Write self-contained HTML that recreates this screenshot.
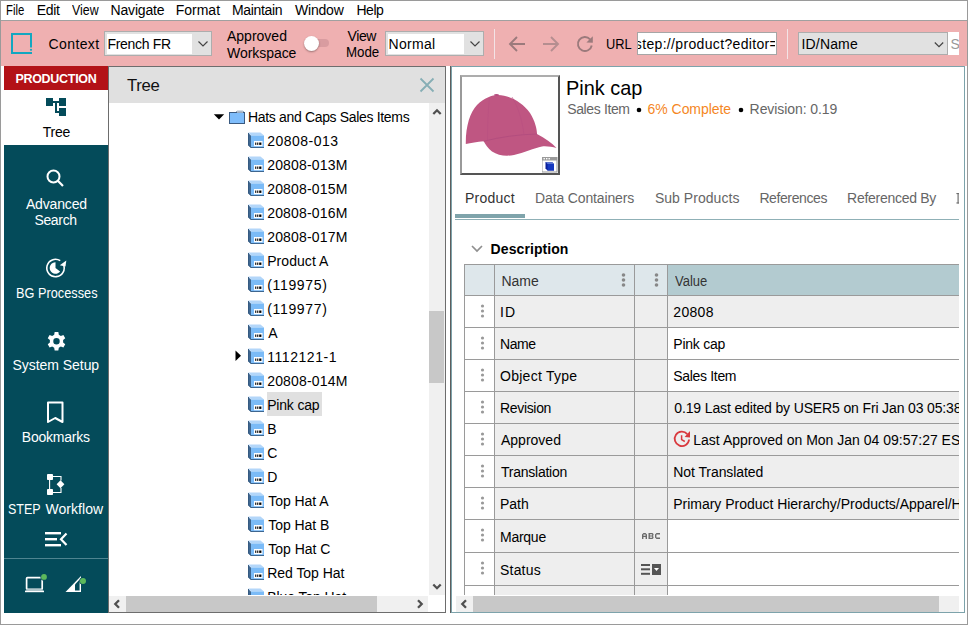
<!DOCTYPE html>
<html><head><meta charset="utf-8"><style>
html,body{margin:0;padding:0;}
body{width:968px;height:625px;position:relative;overflow:hidden;background:#fff;font-family:"Liberation Sans", sans-serif;}
div,svg{box-sizing:border-box;}
</style></head><body>
<div style="position:absolute;left:0px;top:0px;width:968px;height:625px;background:#fff;"></div>
<div style="position:absolute;left:5.79px;top:2.5px;font-size:14px;font-weight:400;color:#000;line-height:1;white-space:pre;transform:scaleX(0.8095);transform-origin:0 0;">File</div>
<div style="position:absolute;left:36.80px;top:2.5px;font-size:14px;font-weight:400;color:#000;line-height:1;white-space:pre;letter-spacing:-0.333px;">Edit</div>
<div style="position:absolute;left:72.30px;top:2.5px;font-size:14px;font-weight:400;color:#000;line-height:1;white-space:pre;transform:scaleX(0.8833);transform-origin:0 0;">View</div>
<div style="position:absolute;left:110.60px;top:2.5px;font-size:14px;font-weight:400;color:#000;line-height:1;white-space:pre;letter-spacing:-0.186px;">Navigate</div>
<div style="position:absolute;left:175.70px;top:2.5px;font-size:14px;font-weight:400;color:#000;line-height:1;white-space:pre;letter-spacing:0.000px;">Format</div>
<div style="position:absolute;left:232.00px;top:2.5px;font-size:14px;font-weight:400;color:#000;line-height:1;white-space:pre;letter-spacing:-0.357px;">Maintain</div>
<div style="position:absolute;left:295.00px;top:2.5px;font-size:14px;font-weight:400;color:#000;line-height:1;white-space:pre;letter-spacing:-0.200px;">Window</div>
<div style="position:absolute;left:356.50px;top:2.5px;font-size:14px;font-weight:400;color:#000;line-height:1;white-space:pre;letter-spacing:-0.500px;">Help</div>
<div style="position:absolute;left:1px;top:20px;width:966px;height:1px;background:#a0a0a0;"></div>
<div style="position:absolute;left:1px;top:21px;width:966px;height:45px;background:#efb0b1;"></div>
<svg style="position:absolute;left:10px;top:32px;" width="24" height="24" viewBox="0 0 24 24"><rect x="1" y="1" width="21" height="2" fill="#13a7c0"/><rect x="1" y="1" width="2" height="21" fill="#13a7c0"/><rect x="1" y="20" width="21" height="2" fill="#13a7c0"/><rect x="20" y="1" width="2" height="14.5" fill="#13a7c0"/><circle cx="21" cy="17.8" r="1.1" fill="#13a7c0"/></svg>
<div style="position:absolute;left:48.60px;top:37px;font-size:14px;font-weight:400;color:#000;line-height:1;white-space:pre;letter-spacing:0.383px;">Context</div>
<div style="position:absolute;left:104px;top:31px;width:108px;height:25px;background:#e1e1e1;border:1px solid #adadad;"></div>
<div style="position:absolute;left:107px;top:34px;width:85px;height:20px;background:#fff;"></div>
<div style="position:absolute;left:107.40px;top:37px;font-size:14px;font-weight:400;color:#000;line-height:1;white-space:pre;letter-spacing:-0.300px;">French FR</div>
<svg style="position:absolute;left:197px;top:40px;" width="12" height="8" viewBox="0 0 12 8"><path d="M1.5 1.5 L6 6 L10.5 1.5" fill="none" stroke="#444" stroke-width="1.2"/></svg>
<div style="position:absolute;left:227.00px;top:28.5px;font-size:14px;font-weight:400;color:#000;line-height:1;white-space:pre;letter-spacing:0.000px;">Approved</div>
<div style="position:absolute;left:227.00px;top:45.5px;font-size:14px;font-weight:400;color:#000;line-height:1;white-space:pre;letter-spacing:-0.050px;">Workspace</div>
<div style="position:absolute;left:304px;top:39px;width:25px;height:8px;background:#d99ca0;border-radius:4px;"></div>
<div style="position:absolute;left:303.5px;top:35.5px;width:15px;height:15px;background:#fff;border-radius:50%;box-shadow:0 1px 2px rgba(0,0,0,0.35);"></div>
<div style="position:absolute;left:347.40px;top:28.5px;font-size:14px;font-weight:400;color:#000;line-height:1;white-space:pre;letter-spacing:-0.333px;">View</div>
<div style="position:absolute;left:346.45px;top:45px;font-size:14px;font-weight:400;color:#000;line-height:1;white-space:pre;transform:scaleX(0.9500);transform-origin:0 0;">Mode</div>
<div style="position:absolute;left:385px;top:31px;width:99px;height:25px;background:#e1e1e1;border:1px solid #adadad;"></div>
<div style="position:absolute;left:388px;top:34px;width:76px;height:20px;background:#fff;"></div>
<div style="position:absolute;left:388.60px;top:37px;font-size:14px;font-weight:400;color:#000;line-height:1;white-space:pre;letter-spacing:0.300px;">Normal</div>
<svg style="position:absolute;left:469px;top:40px;" width="12" height="8" viewBox="0 0 12 8"><path d="M1.5 1.5 L6 6 L10.5 1.5" fill="none" stroke="#444" stroke-width="1.2"/></svg>
<div style="position:absolute;left:494px;top:29px;width:1px;height:30px;background:#f3e3e6;"></div>
<svg style="position:absolute;left:508px;top:35px;" width="18" height="18" viewBox="0 0 18 18"><path d="M9 2 L2 9 L9 16 M2 9 H17" fill="none" stroke="#9b7a7c" stroke-width="1.9"/></svg>
<svg style="position:absolute;left:542px;top:35px;" width="18" height="18" viewBox="0 0 18 18"><path d="M9 2 L16 9 L9 16 M16 9 H1" fill="none" stroke="#b58e90" stroke-width="1.9"/></svg>
<svg style="position:absolute;left:576px;top:35px;" width="18" height="18" viewBox="0 0 18 18"><path d="M14.1 4.32 A7 7 0 1 0 15.75 10.46" fill="none" stroke="#9b7a7c" stroke-width="1.9"/><path d="M16.8 1.2 L10.4 7.5 L16.8 7.7 Z" fill="#9b7a7c"/></svg>
<div style="position:absolute;left:606.39px;top:37px;font-size:14px;font-weight:400;color:#000;line-height:1;white-space:pre;transform:scaleX(0.9148);transform-origin:0 0;">URL</div>
<div style="position:absolute;left:637px;top:32px;width:140px;height:23px;background:#fff;border:1px solid #a6a6a6;"></div>
<div style="position:absolute;left:638px;top:33px;width:137px;height:21px;overflow:hidden;"><div style="position:absolute;left:-3.2px;top:4px;font-size:14px;line-height:1;white-space:pre;color:#000;letter-spacing:0.34px">step://product?editor=</div></div>
<div style="position:absolute;left:787px;top:29px;width:1px;height:30px;background:#f3e3e6;"></div>
<div style="position:absolute;left:798px;top:32px;width:150px;height:23px;background:#e1e1e1;border:1px solid #adadad;"></div>
<div style="position:absolute;left:801.50px;top:37px;font-size:14px;font-weight:400;color:#000;line-height:1;white-space:pre;letter-spacing:0.167px;">ID/Name</div>
<svg style="position:absolute;left:933px;top:40.5px;" width="12" height="8" viewBox="0 0 12 8"><path d="M1.8 1.5 L6 5.7 L10.2 1.5" fill="none" stroke="#444" stroke-width="1.2"/></svg>
<div style="position:absolute;left:948px;top:32px;width:11px;height:23px;background:#fff;"></div>
<div style="position:absolute;left:948px;top:32px;width:11px;height:23px;overflow:hidden;"><div style="position:absolute;left:2.5px;top:5px;font-size:14px;line-height:1;color:#999">S</div></div>
<div style="position:absolute;left:4px;top:66px;width:104px;height:24px;background:#b31217;"></div>
<div style="position:absolute;left:15.40px;top:73px;font-size:12.5px;font-weight:700;color:#fff;line-height:1;white-space:pre;letter-spacing:-0.289px;">PRODUCTION</div>
<div style="position:absolute;left:4px;top:90px;width:104px;height:55px;background:#fff;"></div>
<div style="position:absolute;left:4px;top:145px;width:104px;height:468px;background:#044b5a;"></div>
<svg style="position:absolute;left:44px;top:96px;" width="24" height="22" viewBox="0 0 24 22"><rect x="2" y="2" width="7" height="8" fill="#044b5a"/><rect x="15" y="2" width="7" height="8" fill="#044b5a"/><rect x="15" y="12" width="7" height="8" fill="#044b5a"/><path d="M9 6 H15 M12 5 V16 H15" fill="none" stroke="#044b5a" stroke-width="2"/></svg>
<div style="position:absolute;left:42.80px;top:125px;font-size:14px;font-weight:400;color:#000;line-height:1;white-space:pre;letter-spacing:-0.267px;">Tree</div>
<svg style="position:absolute;left:44px;top:168px;" width="22" height="22" viewBox="0 0 22 22"><circle cx="9.5" cy="8.5" r="6" fill="none" stroke="#fff" stroke-width="2"/><path d="M13.8 12.8 L19 18" stroke="#fff" stroke-width="2.2" stroke-linecap="butt"/></svg>
<div style="position:absolute;left:25.90px;top:196.5px;font-size:14px;font-weight:400;color:#fff;line-height:1;white-space:pre;letter-spacing:-0.143px;">Advanced</div>
<div style="position:absolute;left:34.40px;top:213px;font-size:14px;font-weight:400;color:#fff;line-height:1;white-space:pre;letter-spacing:-0.320px;">Search</div>
<svg style="position:absolute;left:44px;top:257px;" width="24" height="23" viewBox="0 0 24 23"><path d="M16.24 3.7 A8.7 8.7 0 1 0 19.38 7.32" fill="none" stroke="#fff" stroke-width="1.6"/><path d="M22.3 3.5 L15.8 8.2 L21.5 9.6 Z" fill="#fff"/><path d="M11.5 11 V5.2 A5.8 5.8 0 1 0 16.13 14.49 Z" fill="#fff"/></svg>
<div style="position:absolute;left:15.79px;top:285.5px;font-size:14px;font-weight:400;color:#fff;line-height:1;white-space:pre;transform:scaleX(0.9114);transform-origin:0 0;">BG Processes</div>
<svg style="position:absolute;left:45px;top:329px;" width="23" height="23" viewBox="0 0 23 23"><path transform="translate(11.5 12.2) scale(0.92) translate(-11.5 -11.5)" fill="#fff" fill-rule="evenodd" d="M9.5 1.5 H13.5 L14 4.5 L16.2 5.8 L19 4.7 L21 8.2 L18.7 10.1 V12.9 L21 14.8 L19 18.3 L16.2 17.2 L14 18.5 L13.5 21.5 H9.5 L9 18.5 L6.8 17.2 L4 18.3 L2 14.8 L4.3 12.9 V10.1 L2 8.2 L4 4.7 L6.8 5.8 L9 4.5 Z M11.5 8 A3.5 3.5 0 1 0 11.5 15 A3.5 3.5 0 1 0 11.5 8 Z"/></svg>
<div style="position:absolute;left:12.50px;top:358px;font-size:14px;font-weight:400;color:#fff;line-height:1;white-space:pre;letter-spacing:-0.045px;">System Setup</div>
<svg style="position:absolute;left:45px;top:400px;" width="22" height="26" viewBox="0 0 22 26"><path d="M3 2.5 H17.5 V22 L10.2 18 L3 22 Z" fill="none" stroke="#fff" stroke-width="2" stroke-linejoin="round"/></svg>
<div style="position:absolute;left:21.80px;top:430px;font-size:14px;font-weight:400;color:#fff;line-height:1;white-space:pre;letter-spacing:-0.238px;">Bookmarks</div>
<svg style="position:absolute;left:44px;top:472px;" width="24" height="24" viewBox="0 0 24 24"><rect x="3" y="2" width="6" height="6" fill="#fff" rx="0.8"/><rect x="3" y="17" width="6" height="6" fill="#fff" rx="0.8"/><path d="M5.6 8 V17 M9 4.5 H17 V8.5 M9 20.5 H17 V16" fill="none" stroke="#fff" stroke-width="1.1"/><path d="M16.5 8.2 L20.4 12.2 L16.5 16.2 L12.6 12.2 Z" fill="#fff"/></svg>
<div style="position:absolute;left:7.91px;top:502px;font-size:14px;font-weight:400;color:#fff;line-height:1;white-space:pre;transform:scaleX(0.8914);transform-origin:0 0;">STEP</div>
<div style="position:absolute;left:45.40px;top:502px;font-size:14px;font-weight:400;color:#fff;line-height:1;white-space:pre;letter-spacing:0.057px;">Workflow</div>
<svg style="position:absolute;left:44px;top:530px;" width="26" height="20" viewBox="0 0 26 20"><rect x="1" y="2" width="16" height="2.4" fill="#fff"/><rect x="1" y="8" width="12" height="2.4" fill="#fff"/><rect x="1" y="14" width="16" height="2.4" fill="#fff"/><path d="M22.5 3.5 L17 9.2 L22.5 15" fill="none" stroke="#fff" stroke-width="2.2"/></svg>
<div style="position:absolute;left:4px;top:558px;width:104px;height:1px;background:#4f8490;"></div>
<svg style="position:absolute;left:22px;top:572px;" width="28" height="24" viewBox="0 0 28 24"><rect x="4.6" y="5.7" width="15.6" height="11.6" rx="0.8" fill="none" stroke="#fff" stroke-width="1.7"/><rect x="4" y="17.2" width="17" height="1.4" fill="#9fb9bf"/><rect x="3" y="18.6" width="19" height="1.6" fill="#fff"/><circle cx="22" cy="4.9" r="3.6" fill="#044b5a"/><circle cx="22" cy="4.9" r="2.9" fill="#5cb85c"/></svg>
<svg style="position:absolute;left:62px;top:572px;" width="28" height="24" viewBox="0 0 28 24"><path d="M3.5 20 L19 4 V20 Z" fill="#fff"/><path d="M13 18.6 H17.6 V7.6 L13 12.4 Z" fill="#044b5a"/><circle cx="21" cy="9" r="3.7" fill="#044b5a"/><circle cx="21" cy="9" r="3" fill="#5cb85c"/></svg>
<div style="position:absolute;left:108px;top:66px;width:338px;height:547px;background:#fff;border:1px solid #6d6d6d;"></div>
<div style="position:absolute;left:109px;top:67px;width:336px;height:36px;background:#e0e0e0;"></div>
<div style="position:absolute;left:127.00px;top:78px;font-size:16.7px;font-weight:400;color:#111;line-height:1;white-space:pre;letter-spacing:-0.333px;">Tree</div>
<svg style="position:absolute;left:419px;top:77px;" width="16" height="16" viewBox="0 0 16 16"><path d="M1.5 1.5 L14.5 14.5 M14.5 1.5 L1.5 14.5" stroke="#86aeb5" stroke-width="1.8"/></svg>
<div style="position:absolute;left:429px;top:103px;width:16px;height:492px;background:#f0f0f0;"></div>
<div style="position:absolute;left:429px;top:311px;width:15px;height:72px;background:#c8c8c8;"></div>
<svg style="position:absolute;left:430px;top:106px;" width="14" height="12" viewBox="0 0 14 12"><path d="M3.3 8 L7 4.3 L10.7 8" fill="none" stroke="#505050" stroke-width="2.3"/></svg>
<svg style="position:absolute;left:430px;top:580px;" width="14" height="12" viewBox="0 0 14 12"><path d="M3.3 4.5 L7 8.2 L10.7 4.5" fill="none" stroke="#505050" stroke-width="2.3"/></svg>
<div style="position:absolute;left:109px;top:596px;width:319px;height:16px;background:#f0f0f0;"></div>
<div style="position:absolute;left:126px;top:596px;width:251px;height:16px;background:#c8c8c8;"></div>
<svg style="position:absolute;left:110px;top:597px;" width="14" height="14" viewBox="0 0 14 14"><path d="M9 3.3 L5.3 7 L9 10.7" fill="none" stroke="#505050" stroke-width="2.3"/></svg>
<svg style="position:absolute;left:413px;top:597px;" width="14" height="14" viewBox="0 0 14 14"><path d="M5 3.3 L8.7 7 L5 10.7" fill="none" stroke="#505050" stroke-width="2.3"/></svg>
<svg style="position:absolute;left:213px;top:114px;" width="12" height="7" viewBox="0 0 12 7"><path d="M0.8 0.3 H11.2 L6 5.6 Z" fill="#000"/></svg>
<svg style="position:absolute;left:229px;top:110px;" width="17" height="15" viewBox="0 0 17 15"><rect x="7.5" y="1.3" width="7" height="2.6" rx="1" fill="#eaf4ff" stroke="#3a5a80" stroke-width="1"/><rect x="0.5" y="2.5" width="15" height="11" fill="#7fbdfb" stroke="#3a5a80" stroke-width="1"/><path d="M8 2 H14" stroke="#fff" stroke-width="1"/></svg>
<div style="position:absolute;left:248.00px;top:110px;font-size:14px;font-weight:400;color:#000;line-height:1;white-space:pre;letter-spacing:-0.333px;">Hats and Caps Sales Items</div>
<div style="position:absolute;left:109px;top:103px;width:320px;height:492px;overflow:hidden">
<svg style="position:absolute;left:139px;top:29px;" width="16" height="16" viewBox="0 0 16 16"><path d="M0 0.8 L3 3.5 V16 L0 13.2 Z" fill="#3f6790"/><path d="M0.3 0.5 H12.5 L16 3.5 H3 Z" fill="#b3d6f9"/><rect x="3" y="3.5" width="13" height="12.5" fill="#7bbbf7"/><rect x="3" y="15" width="13" height="1" fill="#3d6690"/><path d="M0.5 1 V13 L3.2 15.8" fill="none" stroke="#34597f" stroke-width="0.9"/><rect x="6" y="9" width="8.5" height="5.2" fill="#fff"/><rect x="7.2" y="10.5" width="1.1" height="2.4" fill="#000"/><rect x="9.2" y="10.5" width="1.1" height="2.4" fill="#000"/><rect x="11.2" y="10.5" width="2.2" height="2.4" fill="#000"/></svg>
<div style="position:absolute;left:158.20px;top:31px;font-size:14px;font-weight:400;color:#000;line-height:1;white-space:pre;letter-spacing:0.500px;">20808-013</div>
<svg style="position:absolute;left:139px;top:53px;" width="16" height="16" viewBox="0 0 16 16"><path d="M0 0.8 L3 3.5 V16 L0 13.2 Z" fill="#3f6790"/><path d="M0.3 0.5 H12.5 L16 3.5 H3 Z" fill="#b3d6f9"/><rect x="3" y="3.5" width="13" height="12.5" fill="#7bbbf7"/><rect x="3" y="15" width="13" height="1" fill="#3d6690"/><path d="M0.5 1 V13 L3.2 15.8" fill="none" stroke="#34597f" stroke-width="0.9"/><rect x="6" y="9" width="8.5" height="5.2" fill="#fff"/><rect x="7.2" y="10.5" width="1.1" height="2.4" fill="#000"/><rect x="9.2" y="10.5" width="1.1" height="2.4" fill="#000"/><rect x="11.2" y="10.5" width="2.2" height="2.4" fill="#000"/></svg>
<div style="position:absolute;left:158.20px;top:55px;font-size:14px;font-weight:400;color:#000;line-height:1;white-space:pre;letter-spacing:0.178px;">20808-013M</div>
<svg style="position:absolute;left:139px;top:77px;" width="16" height="16" viewBox="0 0 16 16"><path d="M0 0.8 L3 3.5 V16 L0 13.2 Z" fill="#3f6790"/><path d="M0.3 0.5 H12.5 L16 3.5 H3 Z" fill="#b3d6f9"/><rect x="3" y="3.5" width="13" height="12.5" fill="#7bbbf7"/><rect x="3" y="15" width="13" height="1" fill="#3d6690"/><path d="M0.5 1 V13 L3.2 15.8" fill="none" stroke="#34597f" stroke-width="0.9"/><rect x="6" y="9" width="8.5" height="5.2" fill="#fff"/><rect x="7.2" y="10.5" width="1.1" height="2.4" fill="#000"/><rect x="9.2" y="10.5" width="1.1" height="2.4" fill="#000"/><rect x="11.2" y="10.5" width="2.2" height="2.4" fill="#000"/></svg>
<div style="position:absolute;left:158.20px;top:79px;font-size:14px;font-weight:400;color:#000;line-height:1;white-space:pre;letter-spacing:0.178px;">20808-015M</div>
<svg style="position:absolute;left:139px;top:101px;" width="16" height="16" viewBox="0 0 16 16"><path d="M0 0.8 L3 3.5 V16 L0 13.2 Z" fill="#3f6790"/><path d="M0.3 0.5 H12.5 L16 3.5 H3 Z" fill="#b3d6f9"/><rect x="3" y="3.5" width="13" height="12.5" fill="#7bbbf7"/><rect x="3" y="15" width="13" height="1" fill="#3d6690"/><path d="M0.5 1 V13 L3.2 15.8" fill="none" stroke="#34597f" stroke-width="0.9"/><rect x="6" y="9" width="8.5" height="5.2" fill="#fff"/><rect x="7.2" y="10.5" width="1.1" height="2.4" fill="#000"/><rect x="9.2" y="10.5" width="1.1" height="2.4" fill="#000"/><rect x="11.2" y="10.5" width="2.2" height="2.4" fill="#000"/></svg>
<div style="position:absolute;left:158.20px;top:103px;font-size:14px;font-weight:400;color:#000;line-height:1;white-space:pre;letter-spacing:0.178px;">20808-016M</div>
<svg style="position:absolute;left:139px;top:125px;" width="16" height="16" viewBox="0 0 16 16"><path d="M0 0.8 L3 3.5 V16 L0 13.2 Z" fill="#3f6790"/><path d="M0.3 0.5 H12.5 L16 3.5 H3 Z" fill="#b3d6f9"/><rect x="3" y="3.5" width="13" height="12.5" fill="#7bbbf7"/><rect x="3" y="15" width="13" height="1" fill="#3d6690"/><path d="M0.5 1 V13 L3.2 15.8" fill="none" stroke="#34597f" stroke-width="0.9"/><rect x="6" y="9" width="8.5" height="5.2" fill="#fff"/><rect x="7.2" y="10.5" width="1.1" height="2.4" fill="#000"/><rect x="9.2" y="10.5" width="1.1" height="2.4" fill="#000"/><rect x="11.2" y="10.5" width="2.2" height="2.4" fill="#000"/></svg>
<div style="position:absolute;left:158.20px;top:127px;font-size:14px;font-weight:400;color:#000;line-height:1;white-space:pre;letter-spacing:0.178px;">20808-017M</div>
<svg style="position:absolute;left:139px;top:149px;" width="16" height="16" viewBox="0 0 16 16"><path d="M0 0.8 L3 3.5 V16 L0 13.2 Z" fill="#3f6790"/><path d="M0.3 0.5 H12.5 L16 3.5 H3 Z" fill="#b3d6f9"/><rect x="3" y="3.5" width="13" height="12.5" fill="#7bbbf7"/><rect x="3" y="15" width="13" height="1" fill="#3d6690"/><path d="M0.5 1 V13 L3.2 15.8" fill="none" stroke="#34597f" stroke-width="0.9"/><rect x="6" y="9" width="8.5" height="5.2" fill="#fff"/><rect x="7.2" y="10.5" width="1.1" height="2.4" fill="#000"/><rect x="9.2" y="10.5" width="1.1" height="2.4" fill="#000"/><rect x="11.2" y="10.5" width="2.2" height="2.4" fill="#000"/></svg>
<div style="position:absolute;left:158.20px;top:151px;font-size:14px;font-weight:400;color:#000;line-height:1;white-space:pre;letter-spacing:0.062px;">Product A</div>
<svg style="position:absolute;left:139px;top:173px;" width="16" height="16" viewBox="0 0 16 16"><path d="M0 0.8 L3 3.5 V16 L0 13.2 Z" fill="#3f6790"/><path d="M0.3 0.5 H12.5 L16 3.5 H3 Z" fill="#b3d6f9"/><rect x="3" y="3.5" width="13" height="12.5" fill="#7bbbf7"/><rect x="3" y="15" width="13" height="1" fill="#3d6690"/><path d="M0.5 1 V13 L3.2 15.8" fill="none" stroke="#34597f" stroke-width="0.9"/><rect x="6" y="9" width="8.5" height="5.2" fill="#fff"/><rect x="7.2" y="10.5" width="1.1" height="2.4" fill="#000"/><rect x="9.2" y="10.5" width="1.1" height="2.4" fill="#000"/><rect x="11.2" y="10.5" width="2.2" height="2.4" fill="#000"/></svg>
<div style="position:absolute;left:158.20px;top:175px;font-size:14px;font-weight:400;color:#000;line-height:1;white-space:pre;letter-spacing:0.671px;">(119975)</div>
<svg style="position:absolute;left:139px;top:197px;" width="16" height="16" viewBox="0 0 16 16"><path d="M0 0.8 L3 3.5 V16 L0 13.2 Z" fill="#3f6790"/><path d="M0.3 0.5 H12.5 L16 3.5 H3 Z" fill="#b3d6f9"/><rect x="3" y="3.5" width="13" height="12.5" fill="#7bbbf7"/><rect x="3" y="15" width="13" height="1" fill="#3d6690"/><path d="M0.5 1 V13 L3.2 15.8" fill="none" stroke="#34597f" stroke-width="0.9"/><rect x="6" y="9" width="8.5" height="5.2" fill="#fff"/><rect x="7.2" y="10.5" width="1.1" height="2.4" fill="#000"/><rect x="9.2" y="10.5" width="1.1" height="2.4" fill="#000"/><rect x="11.2" y="10.5" width="2.2" height="2.4" fill="#000"/></svg>
<div style="position:absolute;left:158.20px;top:199px;font-size:14px;font-weight:400;color:#000;line-height:1;white-space:pre;letter-spacing:0.671px;">(119977)</div>
<svg style="position:absolute;left:139px;top:221px;" width="16" height="16" viewBox="0 0 16 16"><path d="M0 0.8 L3 3.5 V16 L0 13.2 Z" fill="#3f6790"/><path d="M0.3 0.5 H12.5 L16 3.5 H3 Z" fill="#b3d6f9"/><rect x="3" y="3.5" width="13" height="12.5" fill="#7bbbf7"/><rect x="3" y="15" width="13" height="1" fill="#3d6690"/><path d="M0.5 1 V13 L3.2 15.8" fill="none" stroke="#34597f" stroke-width="0.9"/><rect x="6" y="9" width="8.5" height="5.2" fill="#fff"/><rect x="7.2" y="10.5" width="1.1" height="2.4" fill="#000"/><rect x="9.2" y="10.5" width="1.1" height="2.4" fill="#000"/><rect x="11.2" y="10.5" width="2.2" height="2.4" fill="#000"/></svg>
<div style="position:absolute;left:159.20px;top:223px;font-size:14px;font-weight:400;color:#000;line-height:1;white-space:pre;">A</div>
<svg style="position:absolute;left:139px;top:245px;" width="16" height="16" viewBox="0 0 16 16"><path d="M0 0.8 L3 3.5 V16 L0 13.2 Z" fill="#3f6790"/><path d="M0.3 0.5 H12.5 L16 3.5 H3 Z" fill="#b3d6f9"/><rect x="3" y="3.5" width="13" height="12.5" fill="#7bbbf7"/><rect x="3" y="15" width="13" height="1" fill="#3d6690"/><path d="M0.5 1 V13 L3.2 15.8" fill="none" stroke="#34597f" stroke-width="0.9"/><rect x="6" y="9" width="8.5" height="5.2" fill="#fff"/><rect x="7.2" y="10.5" width="1.1" height="2.4" fill="#000"/><rect x="9.2" y="10.5" width="1.1" height="2.4" fill="#000"/><rect x="11.2" y="10.5" width="2.2" height="2.4" fill="#000"/></svg>
<svg style="position:absolute;left:126px;top:247px;" width="7" height="12" viewBox="0 0 7 12"><path d="M0.5 0.5 V11 L6 5.75 Z" fill="#000"/></svg>
<div style="position:absolute;left:158.20px;top:247px;font-size:14px;font-weight:400;color:#000;line-height:1;white-space:pre;letter-spacing:0.562px;">1112121-1</div>
<svg style="position:absolute;left:139px;top:269px;" width="16" height="16" viewBox="0 0 16 16"><path d="M0 0.8 L3 3.5 V16 L0 13.2 Z" fill="#3f6790"/><path d="M0.3 0.5 H12.5 L16 3.5 H3 Z" fill="#b3d6f9"/><rect x="3" y="3.5" width="13" height="12.5" fill="#7bbbf7"/><rect x="3" y="15" width="13" height="1" fill="#3d6690"/><path d="M0.5 1 V13 L3.2 15.8" fill="none" stroke="#34597f" stroke-width="0.9"/><rect x="6" y="9" width="8.5" height="5.2" fill="#fff"/><rect x="7.2" y="10.5" width="1.1" height="2.4" fill="#000"/><rect x="9.2" y="10.5" width="1.1" height="2.4" fill="#000"/><rect x="11.2" y="10.5" width="2.2" height="2.4" fill="#000"/></svg>
<div style="position:absolute;left:158.20px;top:271px;font-size:14px;font-weight:400;color:#000;line-height:1;white-space:pre;letter-spacing:0.178px;">20808-014M</div>
<div style="position:absolute;left:158px;top:289px;width:55px;height:24px;background:#e0e0e0;"></div>
<svg style="position:absolute;left:139px;top:293px;" width="16" height="16" viewBox="0 0 16 16"><path d="M0 0.8 L3 3.5 V16 L0 13.2 Z" fill="#3f6790"/><path d="M0.3 0.5 H12.5 L16 3.5 H3 Z" fill="#b3d6f9"/><rect x="3" y="3.5" width="13" height="12.5" fill="#7bbbf7"/><rect x="3" y="15" width="13" height="1" fill="#3d6690"/><path d="M0.5 1 V13 L3.2 15.8" fill="none" stroke="#34597f" stroke-width="0.9"/><rect x="6" y="9" width="8.5" height="5.2" fill="#fff"/><rect x="7.2" y="10.5" width="1.1" height="2.4" fill="#000"/><rect x="9.2" y="10.5" width="1.1" height="2.4" fill="#000"/><rect x="11.2" y="10.5" width="2.2" height="2.4" fill="#000"/></svg>
<div style="position:absolute;left:158.20px;top:295px;font-size:14px;font-weight:400;color:#000;line-height:1;white-space:pre;letter-spacing:-0.186px;">Pink cap</div>
<svg style="position:absolute;left:139px;top:317px;" width="16" height="16" viewBox="0 0 16 16"><path d="M0 0.8 L3 3.5 V16 L0 13.2 Z" fill="#3f6790"/><path d="M0.3 0.5 H12.5 L16 3.5 H3 Z" fill="#b3d6f9"/><rect x="3" y="3.5" width="13" height="12.5" fill="#7bbbf7"/><rect x="3" y="15" width="13" height="1" fill="#3d6690"/><path d="M0.5 1 V13 L3.2 15.8" fill="none" stroke="#34597f" stroke-width="0.9"/><rect x="6" y="9" width="8.5" height="5.2" fill="#fff"/><rect x="7.2" y="10.5" width="1.1" height="2.4" fill="#000"/><rect x="9.2" y="10.5" width="1.1" height="2.4" fill="#000"/><rect x="11.2" y="10.5" width="2.2" height="2.4" fill="#000"/></svg>
<div style="position:absolute;left:158.20px;top:319px;font-size:14px;font-weight:400;color:#000;line-height:1;white-space:pre;">B</div>
<svg style="position:absolute;left:139px;top:341px;" width="16" height="16" viewBox="0 0 16 16"><path d="M0 0.8 L3 3.5 V16 L0 13.2 Z" fill="#3f6790"/><path d="M0.3 0.5 H12.5 L16 3.5 H3 Z" fill="#b3d6f9"/><rect x="3" y="3.5" width="13" height="12.5" fill="#7bbbf7"/><rect x="3" y="15" width="13" height="1" fill="#3d6690"/><path d="M0.5 1 V13 L3.2 15.8" fill="none" stroke="#34597f" stroke-width="0.9"/><rect x="6" y="9" width="8.5" height="5.2" fill="#fff"/><rect x="7.2" y="10.5" width="1.1" height="2.4" fill="#000"/><rect x="9.2" y="10.5" width="1.1" height="2.4" fill="#000"/><rect x="11.2" y="10.5" width="2.2" height="2.4" fill="#000"/></svg>
<div style="position:absolute;left:158.20px;top:343px;font-size:14px;font-weight:400;color:#000;line-height:1;white-space:pre;">C</div>
<svg style="position:absolute;left:139px;top:365px;" width="16" height="16" viewBox="0 0 16 16"><path d="M0 0.8 L3 3.5 V16 L0 13.2 Z" fill="#3f6790"/><path d="M0.3 0.5 H12.5 L16 3.5 H3 Z" fill="#b3d6f9"/><rect x="3" y="3.5" width="13" height="12.5" fill="#7bbbf7"/><rect x="3" y="15" width="13" height="1" fill="#3d6690"/><path d="M0.5 1 V13 L3.2 15.8" fill="none" stroke="#34597f" stroke-width="0.9"/><rect x="6" y="9" width="8.5" height="5.2" fill="#fff"/><rect x="7.2" y="10.5" width="1.1" height="2.4" fill="#000"/><rect x="9.2" y="10.5" width="1.1" height="2.4" fill="#000"/><rect x="11.2" y="10.5" width="2.2" height="2.4" fill="#000"/></svg>
<div style="position:absolute;left:158.20px;top:367px;font-size:14px;font-weight:400;color:#000;line-height:1;white-space:pre;">D</div>
<svg style="position:absolute;left:139px;top:389px;" width="16" height="16" viewBox="0 0 16 16"><path d="M0 0.8 L3 3.5 V16 L0 13.2 Z" fill="#3f6790"/><path d="M0.3 0.5 H12.5 L16 3.5 H3 Z" fill="#b3d6f9"/><rect x="3" y="3.5" width="13" height="12.5" fill="#7bbbf7"/><rect x="3" y="15" width="13" height="1" fill="#3d6690"/><path d="M0.5 1 V13 L3.2 15.8" fill="none" stroke="#34597f" stroke-width="0.9"/><rect x="6" y="9" width="8.5" height="5.2" fill="#fff"/><rect x="7.2" y="10.5" width="1.1" height="2.4" fill="#000"/><rect x="9.2" y="10.5" width="1.1" height="2.4" fill="#000"/><rect x="11.2" y="10.5" width="2.2" height="2.4" fill="#000"/></svg>
<div style="position:absolute;left:159.20px;top:391px;font-size:14px;font-weight:400;color:#000;line-height:1;white-space:pre;letter-spacing:-0.037px;">Top Hat A</div>
<svg style="position:absolute;left:139px;top:413px;" width="16" height="16" viewBox="0 0 16 16"><path d="M0 0.8 L3 3.5 V16 L0 13.2 Z" fill="#3f6790"/><path d="M0.3 0.5 H12.5 L16 3.5 H3 Z" fill="#b3d6f9"/><rect x="3" y="3.5" width="13" height="12.5" fill="#7bbbf7"/><rect x="3" y="15" width="13" height="1" fill="#3d6690"/><path d="M0.5 1 V13 L3.2 15.8" fill="none" stroke="#34597f" stroke-width="0.9"/><rect x="6" y="9" width="8.5" height="5.2" fill="#fff"/><rect x="7.2" y="10.5" width="1.1" height="2.4" fill="#000"/><rect x="9.2" y="10.5" width="1.1" height="2.4" fill="#000"/><rect x="11.2" y="10.5" width="2.2" height="2.4" fill="#000"/></svg>
<div style="position:absolute;left:159.20px;top:415px;font-size:14px;font-weight:400;color:#000;line-height:1;white-space:pre;letter-spacing:-0.037px;">Top Hat B</div>
<svg style="position:absolute;left:139px;top:437px;" width="16" height="16" viewBox="0 0 16 16"><path d="M0 0.8 L3 3.5 V16 L0 13.2 Z" fill="#3f6790"/><path d="M0.3 0.5 H12.5 L16 3.5 H3 Z" fill="#b3d6f9"/><rect x="3" y="3.5" width="13" height="12.5" fill="#7bbbf7"/><rect x="3" y="15" width="13" height="1" fill="#3d6690"/><path d="M0.5 1 V13 L3.2 15.8" fill="none" stroke="#34597f" stroke-width="0.9"/><rect x="6" y="9" width="8.5" height="5.2" fill="#fff"/><rect x="7.2" y="10.5" width="1.1" height="2.4" fill="#000"/><rect x="9.2" y="10.5" width="1.1" height="2.4" fill="#000"/><rect x="11.2" y="10.5" width="2.2" height="2.4" fill="#000"/></svg>
<div style="position:absolute;left:159.20px;top:439px;font-size:14px;font-weight:400;color:#000;line-height:1;white-space:pre;letter-spacing:0.000px;">Top Hat C</div>
<svg style="position:absolute;left:139px;top:461px;" width="16" height="16" viewBox="0 0 16 16"><path d="M0 0.8 L3 3.5 V16 L0 13.2 Z" fill="#3f6790"/><path d="M0.3 0.5 H12.5 L16 3.5 H3 Z" fill="#b3d6f9"/><rect x="3" y="3.5" width="13" height="12.5" fill="#7bbbf7"/><rect x="3" y="15" width="13" height="1" fill="#3d6690"/><path d="M0.5 1 V13 L3.2 15.8" fill="none" stroke="#34597f" stroke-width="0.9"/><rect x="6" y="9" width="8.5" height="5.2" fill="#fff"/><rect x="7.2" y="10.5" width="1.1" height="2.4" fill="#000"/><rect x="9.2" y="10.5" width="1.1" height="2.4" fill="#000"/><rect x="11.2" y="10.5" width="2.2" height="2.4" fill="#000"/></svg>
<div style="position:absolute;left:158.20px;top:463px;font-size:14px;font-weight:400;color:#000;line-height:1;white-space:pre;letter-spacing:-0.030px;">Red Top Hat</div>
<svg style="position:absolute;left:139px;top:485px;" width="16" height="16" viewBox="0 0 16 16"><path d="M0 0.8 L3 3.5 V16 L0 13.2 Z" fill="#3f6790"/><path d="M0.3 0.5 H12.5 L16 3.5 H3 Z" fill="#b3d6f9"/><rect x="3" y="3.5" width="13" height="12.5" fill="#7bbbf7"/><rect x="3" y="15" width="13" height="1" fill="#3d6690"/><path d="M0.5 1 V13 L3.2 15.8" fill="none" stroke="#34597f" stroke-width="0.9"/><rect x="6" y="9" width="8.5" height="5.2" fill="#fff"/><rect x="7.2" y="10.5" width="1.1" height="2.4" fill="#000"/><rect x="9.2" y="10.5" width="1.1" height="2.4" fill="#000"/><rect x="11.2" y="10.5" width="2.2" height="2.4" fill="#000"/></svg>
<div style="position:absolute;left:158.20px;top:487px;font-size:14px;font-weight:400;color:#000;line-height:1;white-space:pre;letter-spacing:-0.091px;">Blue Top Hat</div>
</div>
<div style="position:absolute;left:450px;top:66px;width:515px;height:547px;background:#fff;border:1px solid #7da3ab;"></div>
<div style="position:absolute;left:450px;top:66px;width:1px;height:547px;background:#5e5e5e;"></div>
<div style="position:absolute;left:451px;top:67px;width:1px;height:545px;background:#7da3ab;"></div>
<div style="position:absolute;left:460px;top:75px;width:100px;height:100px;background:#fff;border-style:solid;border-width:2px;border-color:#adadad #555 #555 #9a9a9a;"></div>
<svg style="position:absolute;left:462px;top:77px;" width="96" height="96" viewBox="0 0 96 96"><path d="M3.8 67 C3.5 50 8 35 15 28 C22 21 30 18 36 18 C48 18.5 60 25 68 36 C73 44 75 52 75 57 C83 61 90 66 94.5 71 C90 70 85 69 80 69.5 C72 71 62 76 52 78 C44 79.5 36 78.5 30 74.5 C26 71.5 23 67 21.7 64.3 C15 65 9 66 3.8 67 Z" fill="#bf5682"/><path d="M21.7 64.3 C38 60 56 57.5 75 57" fill="none" stroke="#b04b7d" stroke-width="0.8"/><path d="M27.4 21 C26 35 25.5 50 25.5 63" fill="none" stroke="#b84f82" stroke-width="0.6"/><path d="M50 20 C56 30 60 42 62 58" fill="none" stroke="#b84f82" stroke-width="0.6"/><ellipse cx="34.5" cy="18" rx="2.5" ry="1.1" fill="#b44d7f"/></svg>
<svg style="position:absolute;left:542px;top:157px;" width="16" height="16" viewBox="0 0 16 16"><rect x="0" y="0" width="15" height="15" fill="#fff" stroke="#999" stroke-width="1"/><rect x="0" y="0" width="15" height="3.5" fill="#9a9a9a"/><rect x="1.5" y="1" width="1.4" height="1.4" fill="#fff"/><rect x="4" y="1" width="1.4" height="1.4" fill="#fff"/><rect x="6.5" y="1" width="1.4" height="1.4" fill="#fff"/><path d="M3.5 5 H10 L12 7 V13.5 H5.5 L3.5 11.5 Z" fill="#0a1f9a"/><rect x="5.5" y="7" width="6.5" height="6.5" fill="#1538c0"/><path d="M3.8 5 H10 L12 7 H5.5 Z" fill="#5a74d0"/></svg>
<div style="position:absolute;left:566.10px;top:77px;font-size:21px;font-weight:400;color:#000;line-height:1;white-space:pre;transform:scaleX(0.9487);transform-origin:0 0;">Pink cap</div>
<div style="position:absolute;left:567.20px;top:102px;font-size:14px;font-weight:400;color:#666;line-height:1;white-space:pre;letter-spacing:-0.367px;">Sales Item</div>
<svg style="position:absolute;left:636px;top:107px;" width="6" height="6" viewBox="0 0 6 6"><circle cx="3" cy="3" r="2.3" fill="#000"/></svg>
<div style="position:absolute;left:647.60px;top:102px;font-size:14px;font-weight:400;color:#f5871f;line-height:1;white-space:pre;letter-spacing:-0.050px;">6% Complete</div>
<svg style="position:absolute;left:738px;top:107px;" width="6" height="6" viewBox="0 0 6 6"><circle cx="3" cy="3" r="2.3" fill="#000"/></svg>
<div style="position:absolute;left:749.60px;top:102px;font-size:14px;font-weight:400;color:#666;line-height:1;white-space:pre;letter-spacing:-0.077px;">Revision: 0.19</div>
<div style="position:absolute;left:465.00px;top:191px;font-size:14px;font-weight:400;color:#333;line-height:1;white-space:pre;letter-spacing:0.250px;">Product</div>
<div style="position:absolute;left:535.10px;top:191px;font-size:14px;font-weight:400;color:#666;line-height:1;white-space:pre;letter-spacing:-0.143px;">Data Containers</div>
<div style="position:absolute;left:654.90px;top:191px;font-size:14px;font-weight:400;color:#666;line-height:1;white-space:pre;letter-spacing:0.045px;">Sub Products</div>
<div style="position:absolute;left:759.40px;top:191px;font-size:14px;font-weight:400;color:#666;line-height:1;white-space:pre;letter-spacing:-0.400px;">References</div>
<div style="position:absolute;left:847.10px;top:191px;font-size:14px;font-weight:400;color:#666;line-height:1;white-space:pre;letter-spacing:-0.283px;">Referenced By</div>
<svg style="position:absolute;left:956px;top:192px;" width="3" height="12" viewBox="0 0 3 12"><rect x="1.5" y="1" width="1.2" height="10.5" fill="#6f6f6f"/><rect x="0.4" y="1" width="2.6" height="1.1" fill="#6f6f6f"/><rect x="0.4" y="10.4" width="2.6" height="1.1" fill="#6f6f6f"/></svg>
<div style="position:absolute;left:455px;top:219px;width:504px;height:1px;background:#8fb0b6;"></div>
<div style="position:absolute;left:455px;top:214px;width:70px;height:4px;background:#7fa4ab;"></div>
<svg style="position:absolute;left:470px;top:244px;" width="14" height="10" viewBox="0 0 14 10"><path d="M2 2 L7 7 L12 2" fill="none" stroke="#8f8f8f" stroke-width="1.7"/></svg>
<div style="position:absolute;left:490.60px;top:242px;font-size:14px;font-weight:700;color:#000;line-height:1;white-space:pre;letter-spacing:0.080px;">Description</div>
<div style="position:absolute;left:464px;top:264px;width:495px;height:331px;overflow:hidden">
<div style="position:absolute;left:0px;top:0px;width:495px;height:31px;background:#dee7eb;"></div>
<div style="position:absolute;left:203px;top:0px;width:495px;height:31px;background:#b3cbd0;"></div>
<div style="position:absolute;left:31px;top:32px;width:139px;height:31px;background:#eeeeee;"></div>
<div style="position:absolute;left:171px;top:32px;width:32px;height:31px;background:#eeeeee;"></div>
<div style="position:absolute;left:204px;top:32px;width:400px;height:31px;background:#eeeeee;"></div>
<div style="position:absolute;left:31px;top:64px;width:139px;height:31px;background:#eeeeee;"></div>
<div style="position:absolute;left:171px;top:64px;width:32px;height:31px;background:#eeeeee;"></div>
<div style="position:absolute;left:31px;top:96px;width:139px;height:31px;background:#eeeeee;"></div>
<div style="position:absolute;left:171px;top:96px;width:32px;height:31px;background:#eeeeee;"></div>
<div style="position:absolute;left:31px;top:128px;width:139px;height:31px;background:#eeeeee;"></div>
<div style="position:absolute;left:171px;top:128px;width:32px;height:31px;background:#eeeeee;"></div>
<div style="position:absolute;left:204px;top:128px;width:400px;height:31px;background:#eeeeee;"></div>
<div style="position:absolute;left:31px;top:160px;width:139px;height:31px;background:#eeeeee;"></div>
<div style="position:absolute;left:171px;top:160px;width:32px;height:31px;background:#eeeeee;"></div>
<div style="position:absolute;left:204px;top:160px;width:400px;height:31px;background:#eeeeee;"></div>
<div style="position:absolute;left:31px;top:192px;width:139px;height:31px;background:#eeeeee;"></div>
<div style="position:absolute;left:171px;top:192px;width:32px;height:31px;background:#eeeeee;"></div>
<div style="position:absolute;left:204px;top:192px;width:400px;height:31px;background:#eeeeee;"></div>
<div style="position:absolute;left:31px;top:224px;width:139px;height:31px;background:#eeeeee;"></div>
<div style="position:absolute;left:171px;top:224px;width:32px;height:31px;background:#eeeeee;"></div>
<div style="position:absolute;left:204px;top:224px;width:400px;height:31px;background:#eeeeee;"></div>
<div style="position:absolute;left:31px;top:256px;width:139px;height:32px;background:#eeeeee;"></div>
<div style="position:absolute;left:171px;top:256px;width:32px;height:32px;background:#eeeeee;"></div>
<div style="position:absolute;left:31px;top:289px;width:139px;height:32px;background:#eeeeee;"></div>
<div style="position:absolute;left:171px;top:289px;width:32px;height:32px;background:#eeeeee;"></div>
<div style="position:absolute;left:31px;top:322px;width:139px;height:32px;background:#eeeeee;"></div>
<div style="position:absolute;left:171px;top:322px;width:32px;height:32px;background:#eeeeee;"></div>
<div style="position:absolute;left:0px;top:0px;width:495px;height:1px;background:#9a9a9a;"></div>
<div style="position:absolute;left:0px;top:31px;width:495px;height:1px;background:#9a9a9a;"></div>
<div style="position:absolute;left:0px;top:63px;width:495px;height:1px;background:#9a9a9a;"></div>
<div style="position:absolute;left:0px;top:95px;width:495px;height:1px;background:#9a9a9a;"></div>
<div style="position:absolute;left:0px;top:127px;width:495px;height:1px;background:#9a9a9a;"></div>
<div style="position:absolute;left:0px;top:159px;width:495px;height:1px;background:#9a9a9a;"></div>
<div style="position:absolute;left:0px;top:191px;width:495px;height:1px;background:#9a9a9a;"></div>
<div style="position:absolute;left:0px;top:223px;width:495px;height:1px;background:#9a9a9a;"></div>
<div style="position:absolute;left:0px;top:255px;width:495px;height:1px;background:#9a9a9a;"></div>
<div style="position:absolute;left:0px;top:288px;width:495px;height:1px;background:#9a9a9a;"></div>
<div style="position:absolute;left:0px;top:321px;width:495px;height:1px;background:#9a9a9a;"></div>
<div style="position:absolute;left:0px;top:354px;width:495px;height:1px;background:#9a9a9a;"></div>
<div style="position:absolute;left:0px;top:0px;width:1px;height:331px;background:#9a9a9a;"></div>
<div style="position:absolute;left:30px;top:0px;width:1px;height:331px;background:#9a9a9a;"></div>
<div style="position:absolute;left:170px;top:0px;width:1px;height:331px;background:#9a9a9a;"></div>
<div style="position:absolute;left:203px;top:0px;width:1px;height:331px;background:#9a9a9a;"></div>
<div style="position:absolute;left:37.40px;top:10px;font-size:14px;font-weight:400;color:#333;line-height:1;white-space:pre;letter-spacing:0.000px;">Name</div>
<div style="position:absolute;left:211.00px;top:10px;font-size:14px;font-weight:400;color:#333;line-height:1;white-space:pre;transform:scaleX(0.9294);transform-origin:0 0;">Value</div>
<svg style="position:absolute;left:156.5px;top:9px;" width="5" height="14" viewBox="0 0 5 14"><circle cx="2.5" cy="2" r="1.8" fill="#888"/><circle cx="2.5" cy="7" r="1.8" fill="#888"/><circle cx="2.5" cy="12" r="1.8" fill="#888"/></svg>
<svg style="position:absolute;left:190.29999999999995px;top:9px;" width="5" height="14" viewBox="0 0 5 14"><circle cx="2.5" cy="2" r="1.8" fill="#888"/><circle cx="2.5" cy="7" r="1.8" fill="#888"/><circle cx="2.5" cy="12" r="1.8" fill="#888"/></svg>
<svg style="position:absolute;left:15.5px;top:40px;" width="5" height="14" viewBox="0 0 5 14"><circle cx="2.5" cy="2" r="1.6" fill="#999"/><circle cx="2.5" cy="7" r="1.6" fill="#999"/><circle cx="2.5" cy="12" r="1.6" fill="#999"/></svg>
<div style="position:absolute;left:36.00px;top:41px;font-size:14px;font-weight:400;color:#000;line-height:1;white-space:pre;letter-spacing:1.000px;">ID</div>
<div style="position:absolute;left:209.30px;top:41px;font-size:14px;font-weight:400;color:#000;line-height:1;white-space:pre;letter-spacing:0.300px;">20808</div>
<svg style="position:absolute;left:15.5px;top:72px;" width="5" height="14" viewBox="0 0 5 14"><circle cx="2.5" cy="2" r="1.6" fill="#999"/><circle cx="2.5" cy="7" r="1.6" fill="#999"/><circle cx="2.5" cy="12" r="1.6" fill="#999"/></svg>
<div style="position:absolute;left:36.00px;top:73px;font-size:14px;font-weight:400;color:#000;line-height:1;white-space:pre;letter-spacing:-0.467px;">Name</div>
<div style="position:absolute;left:209.30px;top:73px;font-size:14px;font-weight:400;color:#000;line-height:1;white-space:pre;letter-spacing:-0.243px;">Pink cap</div>
<svg style="position:absolute;left:15.5px;top:104px;" width="5" height="14" viewBox="0 0 5 14"><circle cx="2.5" cy="2" r="1.6" fill="#999"/><circle cx="2.5" cy="7" r="1.6" fill="#999"/><circle cx="2.5" cy="12" r="1.6" fill="#999"/></svg>
<div style="position:absolute;left:36.00px;top:105px;font-size:14px;font-weight:400;color:#000;line-height:1;white-space:pre;letter-spacing:0.270px;">Object Type</div>
<div style="position:absolute;left:209.30px;top:105px;font-size:14px;font-weight:400;color:#000;line-height:1;white-space:pre;letter-spacing:-0.322px;">Sales Item</div>
<svg style="position:absolute;left:15.5px;top:136px;" width="5" height="14" viewBox="0 0 5 14"><circle cx="2.5" cy="2" r="1.6" fill="#999"/><circle cx="2.5" cy="7" r="1.6" fill="#999"/><circle cx="2.5" cy="12" r="1.6" fill="#999"/></svg>
<div style="position:absolute;left:36.00px;top:137px;font-size:14px;font-weight:400;color:#000;line-height:1;white-space:pre;letter-spacing:-0.329px;">Revision</div>
<div style="position:absolute;left:210.30px;top:137px;font-size:14px;font-weight:400;color:#000;line-height:1;white-space:pre;letter-spacing:-0.140px;">0.19 Last edited by USER5 on Fri Jan 03 05:38</div>
<svg style="position:absolute;left:15.5px;top:168px;" width="5" height="14" viewBox="0 0 5 14"><circle cx="2.5" cy="2" r="1.6" fill="#999"/><circle cx="2.5" cy="7" r="1.6" fill="#999"/><circle cx="2.5" cy="12" r="1.6" fill="#999"/></svg>
<div style="position:absolute;left:37.00px;top:169px;font-size:14px;font-weight:400;color:#000;line-height:1;white-space:pre;letter-spacing:0.000px;">Approved</div>
<svg style="position:absolute;left:15.5px;top:200px;" width="5" height="14" viewBox="0 0 5 14"><circle cx="2.5" cy="2" r="1.6" fill="#999"/><circle cx="2.5" cy="7" r="1.6" fill="#999"/><circle cx="2.5" cy="12" r="1.6" fill="#999"/></svg>
<div style="position:absolute;left:37.00px;top:201px;font-size:14px;font-weight:400;color:#000;line-height:1;white-space:pre;letter-spacing:-0.250px;">Translation</div>
<div style="position:absolute;left:209.30px;top:201px;font-size:14px;font-weight:400;color:#000;line-height:1;white-space:pre;letter-spacing:-0.077px;">Not Translated</div>
<svg style="position:absolute;left:15.5px;top:232px;" width="5" height="14" viewBox="0 0 5 14"><circle cx="2.5" cy="2" r="1.6" fill="#999"/><circle cx="2.5" cy="7" r="1.6" fill="#999"/><circle cx="2.5" cy="12" r="1.6" fill="#999"/></svg>
<div style="position:absolute;left:36.00px;top:233px;font-size:14px;font-weight:400;color:#000;line-height:1;white-space:pre;letter-spacing:0.000px;">Path</div>
<div style="position:absolute;left:209.30px;top:233px;font-size:14px;font-weight:400;color:#000;line-height:1;white-space:pre;letter-spacing:-0.024px;">Primary Product Hierarchy/Products/Apparel/Hats</div>
<svg style="position:absolute;left:15.5px;top:264px;" width="5" height="14" viewBox="0 0 5 14"><circle cx="2.5" cy="2" r="1.6" fill="#999"/><circle cx="2.5" cy="7" r="1.6" fill="#999"/><circle cx="2.5" cy="12" r="1.6" fill="#999"/></svg>
<div style="position:absolute;left:36.00px;top:266px;font-size:14px;font-weight:400;color:#000;line-height:1;white-space:pre;letter-spacing:-0.260px;">Marque</div>
<svg style="position:absolute;left:15.5px;top:297px;" width="5" height="14" viewBox="0 0 5 14"><circle cx="2.5" cy="2" r="1.6" fill="#999"/><circle cx="2.5" cy="7" r="1.6" fill="#999"/><circle cx="2.5" cy="12" r="1.6" fill="#999"/></svg>
<div style="position:absolute;left:36.00px;top:299px;font-size:14px;font-weight:400;color:#000;line-height:1;white-space:pre;letter-spacing:0.200px;">Status</div>
<svg style="position:absolute;left:208px;top:165px;" width="20" height="20" viewBox="0 0 20 20"><path d="M15.3 5.1 A7.2 7.2 0 1 0 17.07 10.53" fill="none" stroke="#d9393e" stroke-width="1.8"/><path d="M18 2 L12.6 8 L18 8.4 Z" fill="#d9393e"/><path d="M9.6 6.3 V10.6 L12.8 12.5" fill="none" stroke="#d9393e" stroke-width="1.5"/></svg>
<div style="position:absolute;left:229.30px;top:169px;font-size:14px;font-weight:400;color:#000;line-height:1;white-space:pre;letter-spacing:0.000px;">Last Approved on Mon Jan 04 09:57:27 EST</div>
<svg style="position:absolute;left:178px;top:269px;" width="19" height="6" viewBox="0 0 19 6"><g fill="#6a6a6a" fill-rule="evenodd"><path d="M0 6 V1.5 L1.5 0 H3.5 L5 1.5 V6 H3.6 V4 H1.4 V6 Z M1.4 1.4 V2.7 H3.6 V1.4 Z"/><path transform="translate(6.5 0)" d="M0 0 H4 L5 1 V2.3 L4.3 3 L5 3.7 V5 L4 6 H0 Z M1.4 1.3 V2.4 H3.6 V1.3 Z M1.4 3.6 V4.7 H3.6 V3.6 Z"/><path transform="translate(13 0)" d="M1.5 0 H5 V1.4 H1.4 V4.6 H5 V6 H1.5 L0 4.5 V1.5 Z"/></g></svg>
<svg style="position:absolute;left:176px;top:299px;" width="23" height="13" viewBox="0 0 23 13"><rect x="1" y="1" width="9" height="2" fill="#555"/><rect x="1" y="5.3" width="9" height="2" fill="#555"/><rect x="1" y="9.8" width="9" height="2" fill="#555"/><rect x="12" y="1" width="9" height="11" fill="#555"/><path d="M14 5 H19 L16.5 8 Z" fill="#fff"/></svg>
</div>
<div style="position:absolute;left:456px;top:596px;width:503px;height:16px;background:#f0f0f0;"></div>
<div style="position:absolute;left:473px;top:596px;width:466px;height:16px;background:#c8c8c8;"></div>
<svg style="position:absolute;left:457px;top:597px;" width="14" height="14" viewBox="0 0 14 14"><path d="M9 3.3 L5.3 7 L9 10.7" fill="none" stroke="#505050" stroke-width="2.3"/></svg>
<div style="position:absolute;left:0px;top:0px;width:968px;height:625px;background:transparent;border:1px solid #9a9a9a;"></div>
</body></html>
